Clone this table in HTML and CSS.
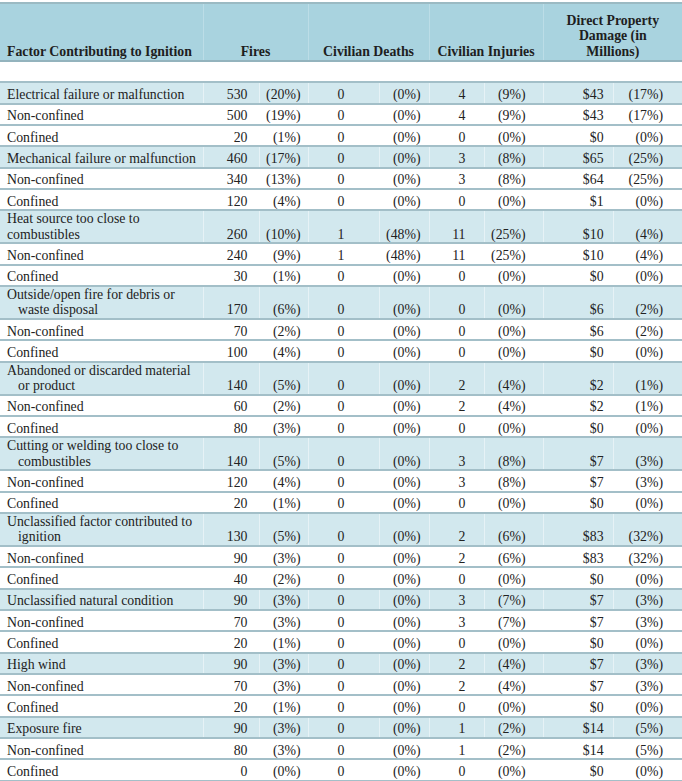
FILE: index.html
```html
<!DOCTYPE html>
<html lang="en">
<head>
<meta charset="utf-8">
<title>Factor Contributing to Ignition</title>
<link rel="stylesheet" href="styles.css">
</head>
<body>
<table class="fire-table">
  <colgroup>
    <col class="w-label"><col class="w-c2"><col class="w-c3"><col class="w-c4"><col class="w-c5"><col class="w-c6"><col class="w-c7"><col class="w-c8"><col class="w-c9">
  </colgroup>
  <thead>
    <tr class="head-row">
      <th class="h-label">Factor Contributing to Ignition</th>
      <th colspan="2">Fires</th>
      <th colspan="2">Civilian Deaths</th>
      <th colspan="2">Civilian Injuries</th>
      <th colspan="2">Direct Property<br>Damage (in<br>Millions)</th>
    </tr>
  </thead>
  <tbody>
    <tr class="spacer"><td colspan="9"></td></tr>
    <tr class="cat"><td>Electrical failure or malfunction</td><td>530</td><td>(20%)</td><td>0</td><td>(0%)</td><td>4</td><td>(9%)</td><td>$43</td><td>(17%)</td></tr>
    <tr><td>Non-confined</td><td>500</td><td>(19%)</td><td>0</td><td>(0%)</td><td>4</td><td>(9%)</td><td>$43</td><td>(17%)</td></tr>
    <tr><td>Confined</td><td>20</td><td>(1%)</td><td>0</td><td>(0%)</td><td>0</td><td>(0%)</td><td>$0</td><td>(0%)</td></tr>
    <tr class="cat"><td>Mechanical failure or malfunction</td><td>460</td><td>(17%)</td><td>0</td><td>(0%)</td><td>3</td><td>(8%)</td><td>$65</td><td>(25%)</td></tr>
    <tr><td>Non-confined</td><td>340</td><td>(13%)</td><td>0</td><td>(0%)</td><td>3</td><td>(8%)</td><td>$64</td><td>(25%)</td></tr>
    <tr><td>Confined</td><td>120</td><td>(4%)</td><td>0</td><td>(0%)</td><td>0</td><td>(0%)</td><td>$1</td><td>(0%)</td></tr>
    <tr class="cat"><td>Heat source too close to<br>combustibles</td><td>260</td><td>(10%)</td><td>1</td><td>(48%)</td><td>11</td><td>(25%)</td><td>$10</td><td>(4%)</td></tr>
    <tr><td>Non-confined</td><td>240</td><td>(9%)</td><td>1</td><td>(48%)</td><td>11</td><td>(25%)</td><td>$10</td><td>(4%)</td></tr>
    <tr><td>Confined</td><td>30</td><td>(1%)</td><td>0</td><td>(0%)</td><td>0</td><td>(0%)</td><td>$0</td><td>(0%)</td></tr>
    <tr class="cat"><td>Outside/open fire for debris or<br><span class="ind">waste disposal</span></td><td>170</td><td>(6%)</td><td>0</td><td>(0%)</td><td>0</td><td>(0%)</td><td>$6</td><td>(2%)</td></tr>
    <tr><td>Non-confined</td><td>70</td><td>(2%)</td><td>0</td><td>(0%)</td><td>0</td><td>(0%)</td><td>$6</td><td>(2%)</td></tr>
    <tr><td>Confined</td><td>100</td><td>(4%)</td><td>0</td><td>(0%)</td><td>0</td><td>(0%)</td><td>$0</td><td>(0%)</td></tr>
    <tr class="cat"><td>Abandoned or discarded material<br><span class="ind">or product</span></td><td>140</td><td>(5%)</td><td>0</td><td>(0%)</td><td>2</td><td>(4%)</td><td>$2</td><td>(1%)</td></tr>
    <tr><td>Non-confined</td><td>60</td><td>(2%)</td><td>0</td><td>(0%)</td><td>2</td><td>(4%)</td><td>$2</td><td>(1%)</td></tr>
    <tr><td>Confined</td><td>80</td><td>(3%)</td><td>0</td><td>(0%)</td><td>0</td><td>(0%)</td><td>$0</td><td>(0%)</td></tr>
    <tr class="cat"><td>Cutting or welding too close to<br><span class="ind">combustibles</span></td><td>140</td><td>(5%)</td><td>0</td><td>(0%)</td><td>3</td><td>(8%)</td><td>$7</td><td>(3%)</td></tr>
    <tr><td>Non-confined</td><td>120</td><td>(4%)</td><td>0</td><td>(0%)</td><td>3</td><td>(8%)</td><td>$7</td><td>(3%)</td></tr>
    <tr><td>Confined</td><td>20</td><td>(1%)</td><td>0</td><td>(0%)</td><td>0</td><td>(0%)</td><td>$0</td><td>(0%)</td></tr>
    <tr class="cat"><td>Unclassified factor contributed to<br><span class="ind">ignition</span></td><td>130</td><td>(5%)</td><td>0</td><td>(0%)</td><td>2</td><td>(6%)</td><td>$83</td><td>(32%)</td></tr>
    <tr><td>Non-confined</td><td>90</td><td>(3%)</td><td>0</td><td>(0%)</td><td>2</td><td>(6%)</td><td>$83</td><td>(32%)</td></tr>
    <tr><td>Confined</td><td>40</td><td>(2%)</td><td>0</td><td>(0%)</td><td>0</td><td>(0%)</td><td>$0</td><td>(0%)</td></tr>
    <tr class="cat"><td>Unclassified natural condition</td><td>90</td><td>(3%)</td><td>0</td><td>(0%)</td><td>3</td><td>(7%)</td><td>$7</td><td>(3%)</td></tr>
    <tr><td>Non-confined</td><td>70</td><td>(3%)</td><td>0</td><td>(0%)</td><td>3</td><td>(7%)</td><td>$7</td><td>(3%)</td></tr>
    <tr><td>Confined</td><td>20</td><td>(1%)</td><td>0</td><td>(0%)</td><td>0</td><td>(0%)</td><td>$0</td><td>(0%)</td></tr>
    <tr class="cat"><td>High wind</td><td>90</td><td>(3%)</td><td>0</td><td>(0%)</td><td>2</td><td>(4%)</td><td>$7</td><td>(3%)</td></tr>
    <tr><td>Non-confined</td><td>70</td><td>(3%)</td><td>0</td><td>(0%)</td><td>2</td><td>(4%)</td><td>$7</td><td>(3%)</td></tr>
    <tr><td>Confined</td><td>20</td><td>(1%)</td><td>0</td><td>(0%)</td><td>0</td><td>(0%)</td><td>$0</td><td>(0%)</td></tr>
    <tr class="cat"><td>Exposure fire</td><td>90</td><td>(3%)</td><td>0</td><td>(0%)</td><td>1</td><td>(2%)</td><td>$14</td><td>(5%)</td></tr>
    <tr><td>Non-confined</td><td>80</td><td>(3%)</td><td>0</td><td>(0%)</td><td>1</td><td>(2%)</td><td>$14</td><td>(5%)</td></tr>
    <tr><td>Confined</td><td>0</td><td>(0%)</td><td>0</td><td>(0%)</td><td>0</td><td>(0%)</td><td>$0</td><td>(0%)</td></tr>
  </tbody>
</table>
</body>
</html>
```
FILE: styles.css
```css
html, body {
  margin: 0;
  padding: 0;
  background: #ffffff;
  overflow: hidden;
}

.fire-table {
  margin-top: 2px;
  width: 682px;
  table-layout: fixed;
  border-collapse: collapse;
  font-family: "Liberation Serif", "Times New Roman", serif;
  font-size: 13.8px;
  color: #222222;
}

.w-label { width: 203px; }
.w-c2 { width: 56px; }
.w-c3 { width: 49px; }
.w-c4 { width: 71px; }
.w-c5 { width: 50px; }
.w-c6 { width: 55px; }
.w-c7 { width: 59px; }
.w-c8 { width: 70px; }
.w-c9 { width: 69px; }

.head-row {
  height: 58px;
}

.head-row th {
  background: #a9d3df;
  border-top: 2px solid #9bbac3;
  border-bottom: 2px solid #93b3bd;
  border-left: 1px solid #bcdde7;
  font-weight: bold;
  line-height: 15.5px;
  text-align: center;
  vertical-align: bottom;
  padding: 0 0 1px 0;
  color: #1e1e1e;
}

.head-row th:first-child {
  border-left: none;
}

.head-row .h-label {
  text-align: left;
  padding-left: 7px;
}

.spacer td {
  height: 19px;
  padding: 0;
  border-bottom: 2px solid #a3bfc8;
}

tbody tr {
  height: 21.33px;
}

tbody td {
  padding: 0;
  line-height: 15.5px;
  vertical-align: bottom;
  text-align: right;
  white-space: nowrap;
  border-bottom: 2px solid #a3bfc8;
  border-left: 1px solid #ffffff;
}

tbody td:first-child {
  text-align: left;
  padding-left: 7px;
  border-left: none;
}

.ind {
  padding-left: 11px;
}

tbody tr.cat td {
  background: #d2e8ee;
  border-left-color: #e6f2f6;
}

tbody tr.cat td:first-child {
  border-left: none;
}

tbody td:nth-child(2) { padding-right: 11px; }
tbody td:nth-child(3) { padding-right: 7px; }
tbody td:nth-child(4) { padding-right: 34px; }
tbody td:nth-child(5) { padding-right: 8px; }
tbody td:nth-child(6) { padding-right: 18px; }
tbody td:nth-child(7) { padding-right: 17px; }
tbody td:nth-child(8) { padding-right: 9px; }
tbody td:nth-child(9) { padding-right: 19px; }
```
